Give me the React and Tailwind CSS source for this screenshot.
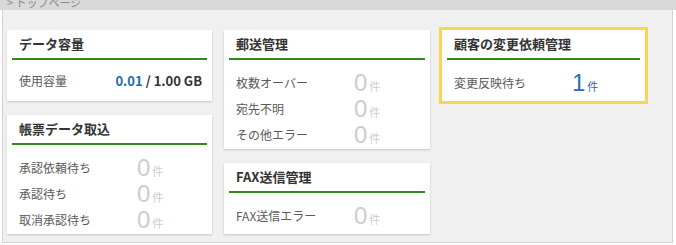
const font = { fontFamily: '"Noto Sans CJK JP", "Noto Sans", sans-serif' };
const digitFont = { fontFamily: '"Liberation Sans", Arial, sans-serif' };

function Card({ title, children, className = "", bodyClass = "mt-[10px]" }) {
    return (
        <div className={`bg-white shadow-[0_1px_2px_rgba(0,0,0,0.18)] pt-[4px] ${className}`}>
            <div className="px-[12px] h-[20px] leading-[20px] text-[13px] font-bold text-[#333]">{title}</div>
            <div className="mx-[5px] mt-[4px] h-[2px] bg-[#2f8a1c]" />
            <div className={bodyClass}>{children}</div>
        </div>
    );
}

function CountRow({ label, count, active }) {
    const color = active ? "text-[#2a6fb5]" : "text-[#cdcdcd]";
    return (
        <div className="flex items-center h-[26px] pl-[12px]">
            <span className="w-[118px] text-[12px] leading-[16px] text-[#5a5a5a]">{label}</span>
            <span className={`text-[24px] font-normal leading-[24px] ${color}`} style={digitFont}>{count}</span>
            <span className={`text-[11px] leading-[12px] ml-[2px] mt-[6px] ${color}`}>件</span>
        </div>
    );
}

export default function App() {
    return (
        <div className="w-[676px] h-[245px] bg-white overflow-hidden" style={font}>
            {/* breadcrumb */}
            <div className="h-[10px] bg-[#d9d9d9] overflow-hidden pl-[7px]">
                <div className="-mt-[4px] text-[11px] leading-[13px] text-[#888]">&gt;&nbsp;トップページ</div>
            </div>

            <div className="ml-[2px] w-[671px] h-[233px] bg-[#eff0ef] border-l border-r border-b border-[#d2d2d2] pt-[20px] pl-[4px] flex gap-[12px]">
                {/* col 1 */}
                <div className="w-[205px] flex flex-col gap-[14px]">
                    <Card title="データ容量" className="h-[71px]" bodyClass="mt-[8px]">
                        <div className="flex items-center justify-between h-[26px] pl-[12px] pr-[10px]">
                            <span className="text-[12px] text-[#5a5a5a]">使用容量</span>
                            <span className="text-[13px] font-bold text-[#333]">
                                <span className="text-[#1f6aab]">0.01</span> / 1.00 GB
                            </span>
                        </div>
                    </Card>
                    <Card title="帳票データ取込" className="h-[119px]">
                        <CountRow label="承認依頼待ち" count="0" />
                        <CountRow label="承認待ち" count="0" />
                        <CountRow label="取消承認待ち" count="0" />
                    </Card>
                </div>

                {/* col 2 */}
                <div className="w-[206px] flex flex-col gap-[14px]">
                    <Card title="郵送管理" className="h-[119px]">
                        <CountRow label="枚数オーバー" count="0" />
                        <CountRow label="宛先不明" count="0" />
                        <CountRow label="その他エラー" count="0" />
                    </Card>
                    <Card title="FAX送信管理" className="h-[71px]">
                        <CountRow label="FAX送信エラー" count="0" />
                    </Card>
                </div>

                {/* col 3 */}
                <div className="w-[203px]">
                    <Card title="顧客の変更依頼管理" className="h-[71px] outline-[3px] outline-solid outline-[#f8d652]">
                        <CountRow label="変更反映待ち" count="1" active />
                    </Card>
                </div>
            </div>
        </div>
    );
}
